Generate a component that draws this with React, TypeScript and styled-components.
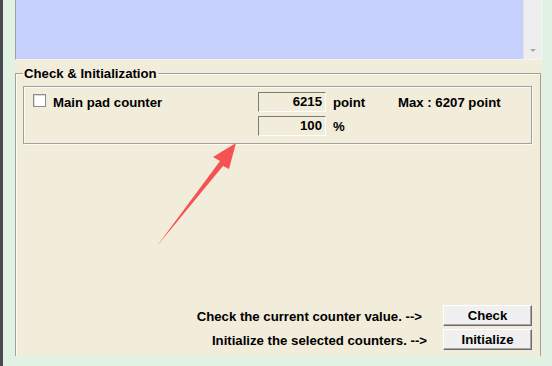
import styled, { createGlobalStyle } from 'styled-components';

const GlobalStyle = createGlobalStyle`
  html, body {
    margin: 0;
    padding: 0;
    background: #e2f2e2;
  }
  body {
    font-family: "Liberation Sans", Arial, sans-serif;
    font-size: 13.2px;
    color: #000;
  }
`;

const Page = styled.div`
  position: relative;
  display: flex;
  width: 552px;
  height: 366px;
  overflow: hidden;
  background: #e2f2e2;
`;

const DarkStrip = styled.div`
  width: 3px;
  height: 100%;
  background: #4a4a52;
`;

const Column = styled.div`
  display: flex;
  flex-direction: column;
  width: 527px;
  margin-left: 12px;
`;

const ListBox = styled.div`
  display: flex;
  height: 59px;
  border-left: 1px solid #a0a0a0;
  border-right: 1px solid #f6f6f6;
  border-bottom: 1px solid #f4f4f4;
`;

const ListArea = styled.div`
  flex: 1;
  background: #c6d0fc;
`;

const ScrollBar = styled.div`
  display: flex;
  flex-direction: column;
  justify-content: flex-end;
  align-items: center;
  width: 18px;
  background: #eeeeee;
  border-left: 1px solid #e4e4e4;
  box-sizing: border-box;
`;

const ScrollArrow = styled.div`
  width: 0;
  height: 0;
  margin-bottom: 7px;
  border-left: 3px solid transparent;
  border-right: 3px solid transparent;
  border-top: 3px solid #a8a8a8;
`;

const Panel = styled.div`
  height: 296px;
  padding-top: 6px;
  box-sizing: border-box;
  background: #f2ecda;
  overflow: hidden;
`;

const GroupBox = styled.fieldset`
  margin: 0 1px 0 0;
  padding: 5px 8px 30px 7px;
  border: 1px solid #a0a0a0;
  box-shadow: inset 1px 1px 0 #fbfaf4;
  min-width: 0;
`;

const Legend = styled.legend`
  padding: 0 1px;
  font-weight: bold;
  font-size: 13.2px;
  line-height: 15px;
`;

const CounterBox = styled.div`
  display: grid;
  grid-template-columns: 225px 68px 72px auto;
  grid-auto-rows: 20px;
  row-gap: 4px;
  align-items: center;
  padding: 5px 0 7px 9px;
  border: 1px solid #a0a0a0;
  box-shadow: inset 1px 1px 0 #fbfaf4, 1px 1px 0 #fbfaf4;
  font-weight: bold;
`;

const CheckRow = styled.label`
  display: flex;
  align-items: center;
  gap: 7px;
`;

const CheckBox = styled.span`
  display: inline-block;
  width: 11px;
  height: 11px;
  margin-top: -3px;
  background: #fff;
  border: 1px solid #8c8c8c;
  box-shadow: inset 1px 1px 0 #dcdcdc;
`;

const Field = styled.div`
  height: 20px;
  box-sizing: border-box;
  padding-right: 3px;
  text-align: right;
  line-height: 18px;
  border: 1px solid;
  border-color: #7a7a7a #ffffff #ffffff #7a7a7a;
  background: #f2ecda;
`;

const Unit = styled.span`
  padding-left: 7px;
`;

const Actions = styled.div`
  display: grid;
  grid-template-columns: 1fr 89px;
  grid-auto-rows: 21px;
  row-gap: 3px;
  align-items: center;
  margin-top: 161px;
  font-weight: bold;
`;

const ActionLabel = styled.span<{ $gap: number }>`
  text-align: right;
  padding-right: ${(p) => p.$gap}px;
  line-height: 21px;
  padding-top: 1px;
`;

const Button = styled.button`
  height: 21px;
  padding: 0;
  font-family: inherit;
  font-size: 13.2px;
  font-weight: bold;
  color: #000;
  background: #f0f0f0;
  border: 1px solid;
  border-color: #ffffff #6a6a6a #6a6a6a #ffffff;
  box-shadow: inset -1px -1px 0 #a8a8a8;
`;

const ArrowSvg = styled.svg`
  position: absolute;
  left: 0;
  top: 0;
  pointer-events: none;
`;

export default function App() {
  return (
    <Page>
      <GlobalStyle />
      <DarkStrip />
      <Column>
        <ListBox>
          <ListArea />
          <ScrollBar>
            <ScrollArrow />
          </ScrollBar>
        </ListBox>
        <Panel>
          <GroupBox>
            <Legend>Check &amp; Initialization</Legend>
            <CounterBox>
              <CheckRow>
                <CheckBox />
                Main pad counter
              </CheckRow>
              <Field>6215</Field>
              <Unit>point</Unit>
              <span>Max : 6207 point</span>
              <span />
              <Field>100</Field>
              <Unit>%</Unit>
              <span />
            </CounterBox>
            <Actions>
              <ActionLabel $gap={21}>Check the current counter value. --&gt;</ActionLabel>
              <Button>Check</Button>
              <ActionLabel $gap={16}>Initialize the selected counters. --&gt;</ActionLabel>
              <Button>Initialize</Button>
            </Actions>
          </GroupBox>
        </Panel>
      </Column>
      <ArrowSvg width="552" height="366" viewBox="0 0 552 366">
        <polygon
          points="236,143 213,157 220,161 157,246 223,166 229,169"
          fill="#f75252"
        />
      </ArrowSvg>
    </Page>
  );
}
